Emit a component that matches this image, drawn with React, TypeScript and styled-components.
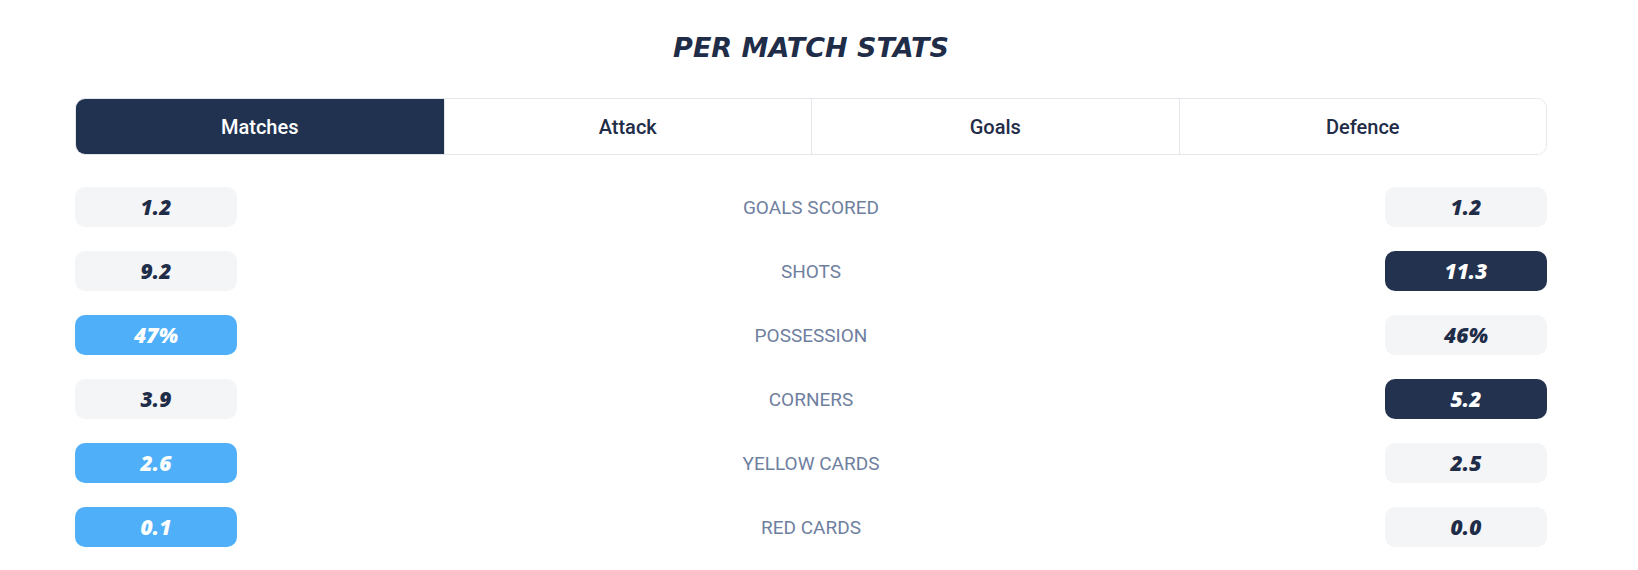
import React, { useState } from "react";
import styled, { createGlobalStyle } from "styled-components";

const GlobalStyle = createGlobalStyle`
  body {
    margin: 0;
    background: #ffffff;
    font-family: Roboto, "Liberation Sans", sans-serif;
  }
`;

const Wrapper = styled.section`
  width: 1472px;
  margin-left: 75px;
  padding-top: 28px;
`;

const Title = styled.h2`
  margin: 0 0 30px;
  height: 40px;
  line-height: 40px;
  text-align: center;
  font-family: "DejaVu Sans", sans-serif;
  font-style: oblique;
  font-weight: 700;
  font-size: 27px;
  color: #1f2d48;
`;

const Tabs = styled.div`
  display: grid;
  grid-template-columns: repeat(4, 1fr);
  height: 57px;
  border: 1px solid #e3e6eb;
  border-radius: 10px;
  box-sizing: border-box;
  overflow: hidden;
`;

const Tab = styled.button<{ $active: boolean }>`
  border: none;
  border-left: 1px solid ${(p) => (p.$active ? "transparent" : "#e3e6eb")};
  &:first-child {
    border-left: none;
  }
  background: ${(p) => (p.$active ? "#213250" : "#ffffff")};
  color: ${(p) => (p.$active ? "#ffffff" : "#1f2d48")};
  font-family: Roboto, sans-serif;
  font-weight: 500;
  font-size: 20px;
  cursor: pointer;
  padding: 0;
`;

const Rows = styled.div`
  display: flex;
  flex-direction: column;
  gap: 24px;
  margin-top: 32px;
`;

const Row = styled.div`
  display: grid;
  grid-template-columns: 162px 1fr 162px;
  align-items: center;
  height: 40px;
`;

type Tone = "plain" | "navy" | "blue";

const Pill = styled.div<{ $tone: Tone }>`
  height: 40px;
  border-radius: 10px;
  display: flex;
  align-items: center;
  justify-content: center;
  font-family: "Open Sans", sans-serif;
  font-style: italic;
  font-weight: 800;
  font-size: 21px;
  background: ${(p) =>
    p.$tone === "navy" ? "#22324f" : p.$tone === "blue" ? "#4faff8" : "#f4f5f7"};
  color: ${(p) => (p.$tone === "plain" ? "#1f2d48" : "#ffffff")};
`;

const Label = styled.div`
  text-align: center;
  font-family: Roboto, sans-serif;
  font-size: 19px;
  text-transform: uppercase;
  color: #6f809f;
`;

const tabs = ["Matches", "Attack", "Goals", "Defence"];

const stats: { label: string; home: string; away: string; hTone: Tone; aTone: Tone }[] = [
  { label: "Goals scored", home: "1.2", away: "1.2", hTone: "plain", aTone: "plain" },
  { label: "Shots", home: "9.2", away: "11.3", hTone: "plain", aTone: "navy" },
  { label: "Possession", home: "47%", away: "46%", hTone: "blue", aTone: "plain" },
  { label: "Corners", home: "3.9", away: "5.2", hTone: "plain", aTone: "navy" },
  { label: "Yellow cards", home: "2.6", away: "2.5", hTone: "blue", aTone: "plain" },
  { label: "Red cards", home: "0.1", away: "0.0", hTone: "blue", aTone: "plain" },
];

export default function App() {
  const [active, setActive] = useState("Matches");
  return (
    <>
      <GlobalStyle />
      <Wrapper>
        <Title>PER MATCH STATS</Title>
        <Tabs>
          {tabs.map((t) => (
            <Tab key={t} $active={t === active} onClick={() => setActive(t)}>
              {t}
            </Tab>
          ))}
        </Tabs>
        <Rows>
          {stats.map((s) => (
            <Row key={s.label}>
              <Pill $tone={s.hTone}>{s.home}</Pill>
              <Label>{s.label}</Label>
              <Pill $tone={s.aTone}>{s.away}</Pill>
            </Row>
          ))}
        </Rows>
      </Wrapper>
    </>
  );
}
